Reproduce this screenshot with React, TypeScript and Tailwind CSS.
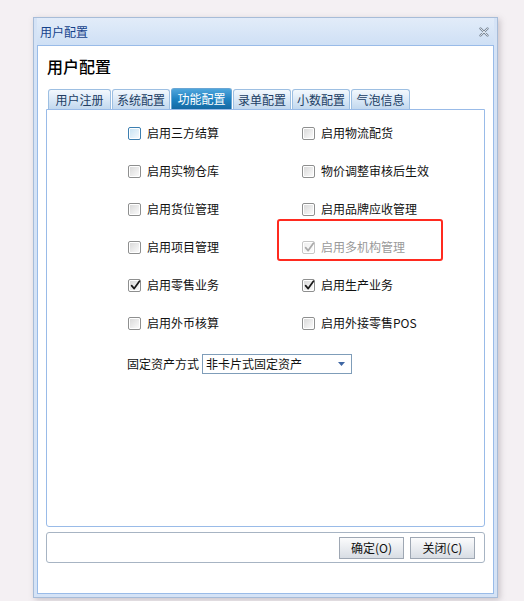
import React from 'react';

const font = { fontFamily: '"Noto Sans CJK SC", "Noto Sans", sans-serif' };

const tabs = [
  { label: '用户注册', w: 'w-[63px]' },
  { label: '系统配置', w: 'w-[58px]' },
  { label: '功能配置', w: 'w-[61px]', active: true },
  { label: '录单配置', w: 'w-[58px]' },
  { label: '小数配置', w: 'w-[58px]' },
  { label: '气泡信息', w: 'w-[59px]' },
];

// left / right pairs, one per row
const rows: { label: string; checked?: boolean; disabled?: boolean; focus?: boolean; marked?: boolean }[][] = [
  [{ label: '启用三方结算', focus: true }, { label: '启用物流配货' }],
  [{ label: '启用实物仓库' }, { label: '物价调整审核后生效' }],
  [{ label: '启用货位管理' }, { label: '启用品牌应收管理' }],
  [{ label: '启用项目管理' }, { label: '启用多机构管理', checked: true, disabled: true, marked: true }],
  [{ label: '启用零售业务', checked: true }, { label: '启用生产业务', checked: true }],
  [{ label: '启用外币核算' }, { label: '启用外接零售POS' }],
];

const CheckBox = ({ checked, disabled, focus }: { checked?: boolean; disabled?: boolean; focus?: boolean }) => {
  const border = focus ? 'border-[#3c7fb1]' : disabled ? 'border-[#c6c6c6]' : 'border-[#8e8f8f]';
  const fill = focus
    ? 'bg-linear-to-br from-[#c9e3f3] to-[#f4f9fd]'
    : disabled
    ? 'bg-linear-to-br from-[#f0f0f0] to-[#fbfbfb]'
    : 'bg-linear-to-br from-[#dadada] to-[#fafafa]';
  return (
    <span className={`relative shrink-0 w-[13px] h-[13px] rounded-[2px] border ${border} bg-white p-[1px]`}>
      <span className={`block w-full h-full ${fill}`} />
      {checked && (
        <svg className="absolute left-[0px] top-[-1px]" width="13" height="13" viewBox="0 0 13 13">
          <path
            d="M2.6 6.6 L5.2 9.6 L10.4 2.2"
            fill="none"
            stroke={disabled ? '#a9a9a9' : '#1a1a1a'}
            strokeWidth="1.7"
            strokeLinecap="round"
            strokeLinejoin="round"
          />
        </svg>
      )}
    </span>
  );
};

const Btn = ({ children }: { children: React.ReactNode }) => (
  <button className="w-[65px] h-[22px] border border-[#9ea7b3] bg-linear-to-b from-[#fbfbfc] to-[#d8dde4] text-[12px] text-[#111] leading-none flex items-center justify-center">
    {children}
  </button>
);

export default function App() {
  return (
    <div style={font} className="min-h-[601px] bg-[#f4f0f3] pt-[17px] pl-[33px]">
      <div className="w-[465px] h-[581px] flex flex-col border border-[#a7bcd8] bg-[#d5e3f6] px-[3px] pb-[3px] shadow-[2px_2px_6px_rgba(120,110,120,0.35)]">
        {/* title bar */}
        <div className="h-[27px] flex items-center justify-between pl-[3px] pr-[5px] bg-linear-to-b from-[#e2ecf9] to-[#cfe0f5]">
          <span className="text-[12px] text-[#15428b] leading-none">用户配置</span>
          <svg width="10" height="10" viewBox="0 0 10 10">
            <path d="M1.5 1.5 L8.5 8.5 M8.5 1.5 L1.5 8.5" stroke="#7d8a99" strokeWidth="2.4" strokeLinecap="round" />
            <path d="M1.5 1.5 L8.5 8.5 M8.5 1.5 L1.5 8.5" stroke="#e9eef5" strokeWidth="0.9" strokeLinecap="round" />
          </svg>
        </div>

        {/* white body */}
        <div className="flex-1 bg-white border border-[#99bbe8] px-[8px] pt-[10px] flex flex-col">
          <div className="text-[16px] leading-[20px] text-black font-medium pl-[1px]">用户配置</div>

          {/* tabs */}
          <div className="mt-[12px] flex items-end gap-[1px] pl-[2px] h-[21px]">
            {tabs.map((t) =>
              t.active ? (
                <div
                  key={t.label}
                  className={`${t.w} h-[21px] rounded-t-[3px] border border-b-0 border-[#6aa6d4] bg-linear-to-b from-[#4ea6dc] via-[#1f83c2] to-[#1569a3] text-white text-[12px] flex items-center justify-center`}
                >
                  {t.label}
                </div>
              ) : (
                <div
                  key={t.label}
                  className={`${t.w} h-[20px] rounded-t-[3px] border border-b-0 border-[#9dbfe2] bg-linear-to-b from-[#f3f8fd] via-[#dbe9f7] to-[#c2d8ee] text-[#213d63] text-[12px] flex items-center justify-center`}
                >
                  {t.label}
                </div>
              )
            )}
          </div>

          {/* content panel */}
          <div className="h-[418px] border border-[#99bbe8] rounded-b-[3px] pt-[4px] pl-[81px] text-[12px] text-[#111]">
            {rows.map((pair, i) => (
              <div key={i} className="h-[38px] flex items-center">
                {pair.map((c, j) => (
                  <div key={j} className="relative w-[174px] flex items-center gap-[6px]">
                    <CheckBox checked={c.checked} disabled={c.disabled} focus={c.focus} />
                    <span className={c.disabled ? 'text-[#9a9a9a]' : ''}>{c.label}</span>
                    {c.marked && (
                      <div className="absolute left-[-25px] top-[-19px] w-[166px] h-[42px] border-2 border-[#ff2a1f] rounded-[3px]" />
                    )}
                  </div>
                ))}
              </div>
            ))}

            <div className="mt-[12px] ml-[-1px] flex items-center gap-[3px]">
              <span>固定资产方式</span>
              <div className="w-[150px] h-[20px] border border-[#7f9db9] flex items-center justify-between pl-[3px] pr-[6px]">
                <span>非卡片式固定资产</span>
                <svg width="7" height="4" viewBox="0 0 7 4">
                  <path d="M0 0 H7 L3.5 4 Z" fill="#3e66a3" />
                </svg>
              </div>
            </div>
          </div>

          {/* toolbar */}
          <div className="mt-[5px] h-[31px] border border-[#a7b4c3] rounded-[3px] flex items-center justify-end gap-[6px] pr-[9px]">
            <Btn>确定(O)</Btn>
            <Btn>关闭(C)</Btn>
          </div>
        </div>
      </div>
    </div>
  );
}
